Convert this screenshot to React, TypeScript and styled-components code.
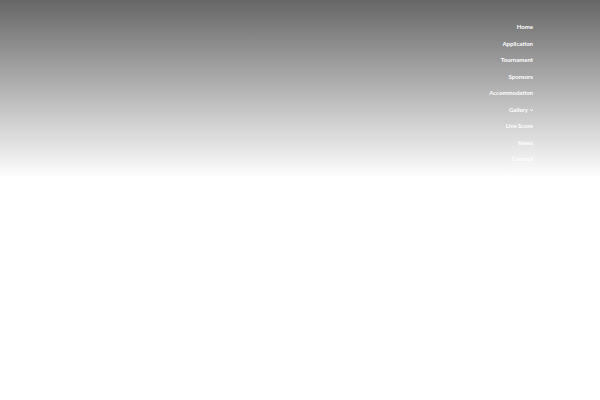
import * as React from "react";
import styled, { createGlobalStyle } from "styled-components";

const colors = {
  white: "#ffffff",
  shade: "rgba(0, 0, 0, 0.6)"
};

const GlobalStyle = createGlobalStyle`
  body {
    margin: 0;
    background-color: ${colors.white};
    font-family: Lato, "Liberation Sans", sans-serif;
  }
`;

const Header = styled.header`
  display: flex;
  justify-content: flex-end;
  box-sizing: border-box;
  min-height: 178px;
  padding: 22px 67px 14px;
  background: linear-gradient(${colors.shade}, transparent);
`;

const NavBar = styled.nav`
  display: flex;
`;

const NavList = styled.ul`
  display: flex;
  flex-direction: column;
  justify-content: space-between;
  align-items: flex-end;
  margin: 0;
  padding: 0;
  list-style: none;
`;

const NavItem = styled.li`
  display: flex;
`;

const NavLink = styled.a`
  display: flex;
  align-items: center;
  gap: 2px;
  color: ${colors.white};
  font-size: 6px;
  font-weight: 700;
  line-height: 10px;
  text-decoration: none;
`;

const Caret = styled.svg`
  width: 3px;
  height: 2px;
`;

const links = [
  { label: "Home" },
  { label: "Application" },
  { label: "Tournament" },
  { label: "Sponsors" },
  { label: "Accommodation" },
  { label: "Gallery", hasMenu: true },
  { label: "Live Score" },
  { label: "News" },
  { label: "Contact" }
];

const App: React.FC = () => {
  return (
    <>
      <GlobalStyle />
      <Header>
        <NavBar>
          <NavList>
            {links.map(({ label, hasMenu }) => (
              <NavItem key={label}>
                <NavLink href="#">
                  {label}
                  {hasMenu && (
                    <Caret viewBox="0 0 6 4" aria-hidden="true">
                      <path d="M0 1l3 2 3-2" fill="none" stroke="currentColor" strokeWidth="2" />
                    </Caret>
                  )}
                </NavLink>
              </NavItem>
            ))}
          </NavList>
        </NavBar>
      </Header>
    </>
  );
};

export default App;
